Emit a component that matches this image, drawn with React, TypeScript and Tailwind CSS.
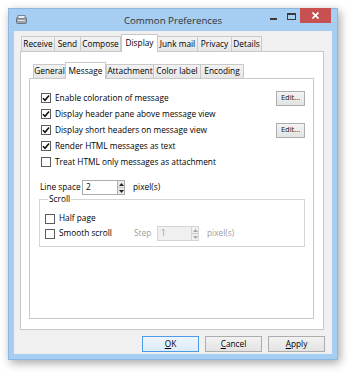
import React from "react";

const Check: React.FC<{ checked?: boolean }> = ({ checked }) => (
  <span className="w-[10px] h-[10px] border border-[#5c5c5c] bg-white flex items-center justify-center shrink-0">
    {checked && (
      <svg width="8" height="8" viewBox="0 0 8 8">
        <path d="M1 4.3 L3 6.3 L7 1.4" stroke="#111" strokeWidth="1.6" fill="none" />
      </svg>
    )}
  </span>
);

const CheckRow: React.FC<{ checked?: boolean; label: string; edit?: boolean }> = ({ checked, label, edit }) => (
  <div className="h-[16px] flex items-center pl-[2px]">
    <Check checked={checked} />
    <span className="ml-[4px] text-[#000]">{label}</span>
    {edit && (
      <button className="ml-auto w-[29px] h-[15px] border border-[#adadad] bg-linear-to-b from-[#f3f3f3] to-[#e3e3e3] text-[7.5px] text-[#111] leading-none">
        Edit...
      </button>
    )}
  </div>
);

const Spin: React.FC<{ disabled?: boolean }> = ({ disabled }) => {
  const c = disabled ? "#a8a8a8" : "#222";
  return (
    <div className={`w-[7px] h-[15px] border border-l-0 flex flex-col ${disabled ? "border-[#d5d5d5] bg-[#f0f0f0]" : "border-[#abadb3] bg-[#eaeaea]"}`}>
      <div className="flex-1 flex items-center justify-center border-b border-[#c8c8c8]">
        <svg width="5" height="3" viewBox="0 0 5 3"><path d="M0 3 L2.5 0 L5 3Z" fill={c} /></svg>
      </div>
      <div className="flex-1 flex items-center justify-center">
        <svg width="5" height="3" viewBox="0 0 5 3"><path d="M0 0 L2.5 3 L5 0Z" fill={c} /></svg>
      </div>
    </div>
  );
};

type TabDef = { label: string; w: number; ml: number; active?: boolean };

const outerTabs: TabDef[] = [
  { label: "Receive", w: 34, ml: 0 },
  { label: "Send", w: 27, ml: -1 },
  { label: "Compose", w: 41, ml: -1 },
  { label: "Display", w: 37, ml: 0, active: true },
  { label: "Junk mail", w: 41, ml: -1 },
  { label: "Privacy", w: 35, ml: -1 },
  { label: "Details", w: 31, ml: -1 },
];

const innerTabs: TabDef[] = [
  { label: "General", w: 33, ml: 0 },
  { label: "Message", w: 41, ml: -1, active: true },
  { label: "Attachment", w: 48, ml: 0 },
  { label: "Color label", w: 48, ml: -1 },
  { label: "Encoding", w: 44, ml: -1 },
];

const Tabs: React.FC<{ tabs: TabDef[]; h: number }> = ({ tabs, h }) => (
  <div className="flex items-end" style={{ height: h }}>
    {tabs.map((t) => (
      <div
        key={t.label}
        className={
          t.active
            ? "relative z-10 self-start bg-white border border-b-0 border-[#c9c9c9] flex items-center justify-center text-[#000]"
            : "bg-linear-to-b from-[#f2f2f2] to-[#e6e6e6] border border-b-0 border-[#c9c9c9] flex items-center justify-center text-[#000]"
        }
        style={{ width: t.w, marginLeft: t.ml, height: t.active ? h + 1 : h - 2 }}
      >
        {t.label}
      </div>
    ))}
  </div>
);

export default function App() {
  return (
    <div className="w-[350px] h-[377px] bg-white pl-[8px] pt-[8px] font-['Segoe_UI','Open_Sans',sans-serif] text-[8.3px] leading-none">
      <div className="w-[330px] h-[352px] bg-[#a6cdf2] border border-[#8db7e1] shadow-[2px_3px_9px_rgba(0,0,0,0.35)] flex flex-col">
        {/* title bar */}
        <div className="h-[22px] grid grid-cols-[1fr_auto_1fr]">
          <div className="flex items-center pl-[7px] pb-[1px]">
            <svg width="11" height="9" viewBox="0 0 11 9">
              <rect x="0.5" y="2.5" width="10" height="6" rx="1" fill="#9aa3ad" stroke="#6d7680" />
              <rect x="2" y="0.5" width="7" height="3" fill="#e9edf1" stroke="#7d8690" />
              <rect x="2" y="5" width="7" height="1" fill="#dfe4e9" />
            </svg>
          </div>
          <div className="flex items-center pt-[1px] text-[9.7px] text-[#333]">Common Preferences</div>
          <div className="flex justify-end items-start pr-[6px]">
            <div className="w-[18px] h-[15px] flex items-end justify-center pb-[4px]">
              <div className="w-[7px] h-[2px] bg-[#3a3a3a]" />
            </div>
            <div className="w-[18px] h-[15px] flex items-center justify-center">
              <div className="w-[9px] h-[7px] border border-t-2 border-[#3a3a3a]" />
            </div>
            <div className="w-[31px] h-[15px] -mt-px bg-[#c75050] flex items-center justify-center">
              <svg width="7" height="7" viewBox="0 0 7 7">
                <path d="M0.5 0.5 L6.5 6.5 M6.5 0.5 L0.5 6.5" stroke="#fff" strokeWidth="1.7" />
              </svg>
            </div>
          </div>
        </div>

        {/* client */}
        <div className="flex-1 mx-[5px] mb-[5px] bg-[#f0f0f0] pt-[3px] pl-[6px] flex flex-col">
          <div className="pl-[1px]">
            <Tabs tabs={outerTabs} h={17} />
          </div>
          <div className="w-[304px] h-[279px] bg-white border border-[#c9c9c9] pt-[10px] pl-[8px]">
            <div className="pl-[4px]">
              <Tabs tabs={innerTabs} h={16} />
            </div>
            <div className="w-[285px] h-[241px] bg-white border border-[#c9c9c9] pt-[11px] pl-[9px] pr-[8px] flex flex-col">
              <CheckRow checked label="Enable coloration of message" edit />
              <CheckRow checked label="Display header pane above message view" />
              <CheckRow checked label="Display short headers on message view" edit />
              <CheckRow checked label="Render HTML messages as text" />
              <CheckRow label="Treat HTML only messages as attachment" />

              <div className="mt-[10px] h-[15px] flex items-center pl-[1px]">
                <span className="w-[42px] text-[#000]">Line space</span>
                <div className="w-[36px] h-[15px] border border-[#abadb3] bg-white flex items-center pl-[3px] text-[#000]">2</div>
                <Spin />
                <span className="ml-[8px] text-[#000]">pixel(s)</span>
              </div>

              <fieldset className="-mt-px border border-[#d5d5d5] pl-[5px] pt-[7px] pb-[5px]">
                <legend className="ml-[3px] px-[1px] leading-[10px] text-[#000]">Scroll</legend>
                <div className="h-[15px] flex items-center">
                  <Check />
                  <span className="ml-[4px] text-[#000]">Half page</span>
                </div>
                <div className="h-[15px] flex items-center">
                  <div className="w-[89px] flex items-center">
                    <Check />
                    <span className="ml-[4px] text-[#000]">Smooth scroll</span>
                  </div>
                  <span className="w-[23px] text-[#9c9c9c]">Step</span>
                  <div className="w-[35px] h-[15px] border border-[#d5d5d5] bg-[#f0f0f0] flex items-center pl-[3px] text-[#9c9c9c]">1</div>
                  <Spin disabled />
                  <span className="ml-[8px] text-[#9c9c9c]">pixel(s)</span>
                </div>
              </fieldset>
            </div>
          </div>

          {/* buttons */}
          <div className="mt-[6px] flex justify-end gap-[6px] pr-[7px]">
            <button className="w-[57px] h-[16px] border border-[#4d9ae6] bg-linear-to-b from-[#eef5fc] to-[#dcebfa] text-[#000] leading-none">
              <u>O</u>K
            </button>
            <button className="w-[57px] h-[16px] border border-[#adadad] bg-linear-to-b from-[#f2f2f2] to-[#e3e3e3] text-[#000] leading-none">
              <u>C</u>ancel
            </button>
            <button className="w-[57px] h-[16px] border border-[#adadad] bg-linear-to-b from-[#f2f2f2] to-[#e3e3e3] text-[#000] leading-none">
              <u>A</u>pply
            </button>
          </div>
        </div>
      </div>
    </div>
  );
}
